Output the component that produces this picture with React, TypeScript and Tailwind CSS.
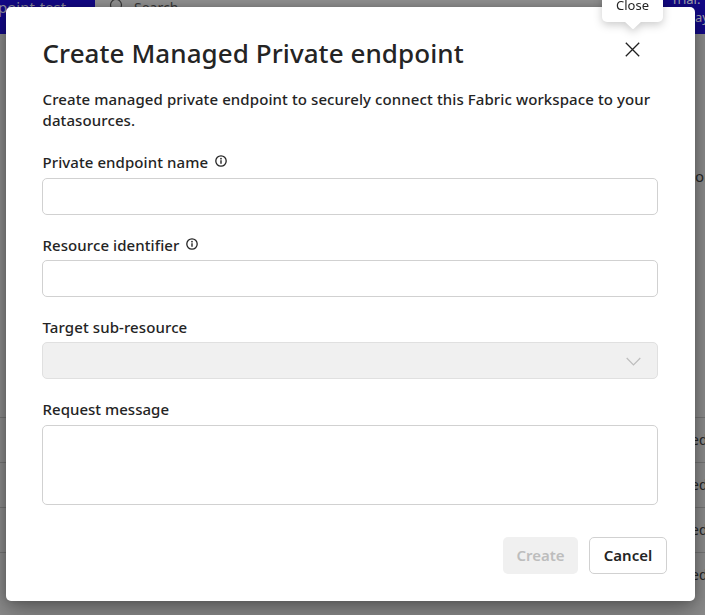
import type { ReactNode } from "react";

function InfoIcon() {
  return (
    <svg width="12" height="12" viewBox="0 0 12 12" fill="none" className="mb-[3px] shrink-0">
      <circle cx="6" cy="6" r="5.2" stroke="#242424" strokeWidth="1.3" />
      <path d="M6 5.3v3.4" stroke="#242424" strokeWidth="1.4" />
      <circle cx="6" cy="3.7" r=".85" fill="#242424" />
    </svg>
  );
}

function Label({ children, info, className }: { children: ReactNode; info?: boolean; className: string }) {
  return (
    <div className="flex h-[22px] items-center gap-[6.7px] pl-[0.5px]">
      <span className={`whitespace-nowrap text-[15px] font-medium leading-[22px] ${className}`}>{children}</span>
      {info && <InfoIcon />}
    </div>
  );
}

function Backdrop() {
  return (
    <div className="flex h-[615px] flex-col bg-[#8b8b8b]">
      <div className="flex h-[34px] shrink-0 justify-between">
        <div className="h-full w-[95px] overflow-hidden bg-[#130986] text-[15px] leading-5 text-[#8c8c9c]">
          <div className="-mt-[3px] -ml-[2px]">point-test</div>
        </div>
        <div className="flex flex-1 items-start overflow-hidden bg-[#919191] pl-[13px] text-[14px] leading-5 text-[#383838]">
          <svg width="18" height="18" viewBox="0 0 18 18" fill="none" stroke="#383838" strokeWidth="1.2" className="-mt-[2px]">
            <circle cx="8" cy="7" r="5.5" />
            <path d="m4 11-4 4" />
          </svg>
          <span className="-mt-[2px] ml-[8px]">Search</span>
        </div>
        <div className="h-full w-[42px] overflow-hidden bg-[#130986] text-[13px] leading-[18px] text-[#a0a0ac]">
          <div className="-mt-[10px] pl-[8px]">Trial:</div>
          <div className="whitespace-nowrap pl-[32px]">ays</div>
        </div>
      </div>
      <div className="flex h-[383px] shrink-0 items-start justify-end overflow-hidden pt-[132px] text-[15px] leading-5 text-[#272727]">
        <span className="w-[10px] whitespace-nowrap">on</span>
      </div>
      {[0, 1, 2, 3].map((row) => (
        <div key={row} className="flex h-[45px] shrink-0 items-center justify-end overflow-hidden border-t border-[#747474] pb-[2px] text-[14px] text-[#272727]">
          <span className="w-[14px] whitespace-nowrap">ed</span>
        </div>
      ))}
    </div>
  );
}

export default function App() {
  return (
    <div className="relative h-[615px] w-[705px] overflow-hidden font-['Noto_Sans','Open_Sans',sans-serif] text-[#242424]">
      <Backdrop />
      <div className="absolute top-[6.5px] left-[6px] flex h-[594.5px] w-[688.5px] flex-col rounded-[5px] bg-white pl-[36px] shadow-[0_10px_24px_rgba(0,0,0,0.32),0_0_8px_rgba(0,0,0,0.2)]">
        <header className="mt-[28.5px] flex h-[36px] w-[616px] items-center justify-between pr-[18px] pl-[0.5px]">
          <h1 className="whitespace-nowrap text-[26px] font-medium leading-9 tracking-[0.07px]">Create Managed Private endpoint</h1>
          <button aria-label="Close" className="mb-[7px]">
            <svg width="15" height="15" viewBox="0 0 15 15" fill="none" stroke="#202020" strokeWidth="1.3" className="block">
              <path d="m.8.8 13.4 13.4M14.2.8.8 14.2" />
            </svg>
          </button>
        </header>
        <p className="mt-[18px] whitespace-nowrap pl-[0.5px] text-[15px] font-medium leading-[21px] tracking-[0.1px]">
          Create managed private endpoint to securely connect this Fabric workspace to your
          <br />
          datasources.
        </p>
        <div className="mt-[20px] flex w-[616px] flex-col">
          <Label info className="tracking-[0.08px]">Private endpoint name</Label>
          <div className="mt-[5px] mb-[19px] h-[37px] rounded-[5px] border border-[#d1d1d1]" />
          <Label info className="tracking-[0.08px]">Resource identifier</Label>
          <div className="mt-[4px] mb-[19px] h-[37px] rounded-[5px] border border-[#d1d1d1]" />
          <Label className="tracking-[0.1px]">Target sub-resource</Label>
          <div className="mt-[4px] mb-[19px] flex h-[37px] items-center justify-end rounded-[5px] border border-[#e0e0e0] bg-[#f0f0f0] pr-[16px]">
            <svg width="15" height="9" viewBox="0 0 15 9" fill="none" stroke="#bdbdbd" strokeWidth="1.2" className="mt-[2px]">
              <path d="m.7 1 6.8 6.8L14.3 1" />
            </svg>
          </div>
          <Label className="tracking-[0.02px]">Request message</Label>
          <div className="mt-[5px] h-[80px] rounded-[5px] border border-[#d1d1d1]" />
        </div>
        <footer className="mt-[32px] flex justify-end gap-[11px] pr-[27.5px] text-[15px] font-semibold">
          <button disabled className="h-[37px] w-[75px] rounded-[5px] bg-[#f0f0f0] pb-[1px] text-[#bdbdbd]">Create</button>
          <button className="h-[37px] w-[78px] rounded-[5px] border border-[#d1d1d1] bg-white pb-[1px]">Cancel</button>
        </footer>
      </div>
      <div className="absolute -top-[10px] left-[602px] flex h-[32px] w-[61px] items-center justify-center rounded-[5px] bg-white text-[13px] drop-shadow-[0_3px_4px_rgba(0,0,0,0.2)]">
        Close
        <svg width="18" height="9" viewBox="0 0 18 9" className="absolute top-[31px] left-[22px] fill-white">
          <path d="M0 0h18L10 7.5Q9 8.7 8 7.5Z" />
        </svg>
      </div>
    </div>
  );
}
